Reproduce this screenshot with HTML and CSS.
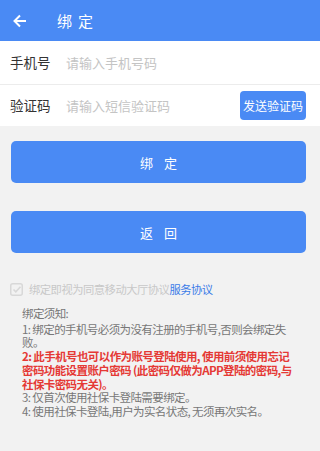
FILE: index.html
```html
<!DOCTYPE html>
<html lang="zh">
<head>
<meta charset="utf-8">
<link rel="stylesheet" href="styles.css">
</head>
<body>
<div class="header">
  <svg class="back" width="14" height="14" viewBox="0 0 14 14"><path d="M13 7H2M7 1.5L1.5 7L7 12.5" fill="none" stroke="#fff" stroke-width="2"/></svg>
  <span class="title">绑定</span>
</div>
<div class="form">
  <div class="row">
    <span class="label">手机号</span>
    <span class="ph">请输入手机号码</span>
  </div>
  <div class="row">
    <span class="label">验证码</span>
    <span class="ph">请输入短信验证码</span>
    <span class="send">发送验证码</span>
  </div>
</div>
<div class="btns">
  <div class="btn">绑定</div>
  <div class="btn">返回</div>
</div>
<div class="agree">
  <svg class="chk" width="13" height="13" viewBox="0 0 13 13"><rect x="0.75" y="0.75" width="11.5" height="11.5" rx="2" fill="none" stroke="#d8d8d8" stroke-width="1.5"/><path d="M3.5 6.5L5.8 8.8L10.5 3.8" fill="none" stroke="#d8d8d8" stroke-width="1.6"/></svg>
  <span>绑定即视为同意移动大厅协议<a class="link">服务协议</a></span>
</div>
<div class="notes">
  <p class="head">绑定须知:</p>
  <p>1: 绑定的手机号必须为没有注册的手机号,否则会绑定失败。</p>
  <p class="red">2: 此手机号也可以作为账号登陆使用, 使用前须使用忘记密码功能设置账户密码 (此密码仅做为APP登陆的密码,与社保卡密码无关)。</p>
  <p>3: 仅首次使用社保卡登陆需要绑定。</p>
  <p>4: 使用社保卡登陆,用户为实名状态, 无须再次实名。</p>
</div>
</body>
</html>
```
FILE: styles.css
```css
* { box-sizing: border-box; }
html, body { margin: 0; padding: 0; }
body {
  background: #f2f2f2;
  font-family: "Noto Sans CJK SC", "Roboto", sans-serif;
  width: 320px;
  height: 451px;
  overflow: hidden;
}
.header {
  height: 41px;
  background: #4a8af4;
  display: flex;
  align-items: center;
  padding-left: 13px;
}
.back { display: block; }
.title {
  color: #fff;
  font-size: 15px;
  margin-left: 30px;
  letter-spacing: 6px;
}
.form { background: #fff; }
.row {
  height: 42.5px;
  display: flex;
  align-items: center;
  padding: 0 14px 0 10px;
}
.row + .row { border-top: 1px solid #ececec; }
.label {
  font-size: 13.5px;
  color: #333;
  width: 56px;
}
.ph {
  font-size: 13px;
  color: #c4c4c4;
  flex: 1;
}
.send {
  background: #4a8af4;
  color: #fff;
  font-size: 12px;
  border-radius: 4px;
  padding: 0 3px;
  height: 29px;
  line-height: 29px;
}
.btns {
  padding: 15px 14px 0 11px;
  display: flex;
  flex-direction: column;
  gap: 28px;
}
.btn {
  height: 42px;
  background: #4a8af4;
  border-radius: 5px;
  color: #fff;
  font-size: 13px;
  letter-spacing: 11px;
  padding-left: 11px;
  display: flex;
  align-items: center;
  justify-content: center;
}
.agree {
  margin-top: 29px;
  padding-left: 10px;
  display: flex;
  align-items: center;
  font-size: 11.3px;
  letter-spacing: -0.5px;
  color: #c8c8c8;
  height: 14px;
}
.chk { margin-right: 6px; }
.link { color: #3b7ce8; }
.notes {
  margin-top: 11px;
  padding: 0 23px 0 22px;
  font-size: 11.5px;
  letter-spacing: -0.6px;
  line-height: 13.7px;
  color: #777;
}
.notes p { margin: 0; }
.notes .head { margin-bottom: 2px; }
.red { color: #e53935; font-weight: 700; }
```
